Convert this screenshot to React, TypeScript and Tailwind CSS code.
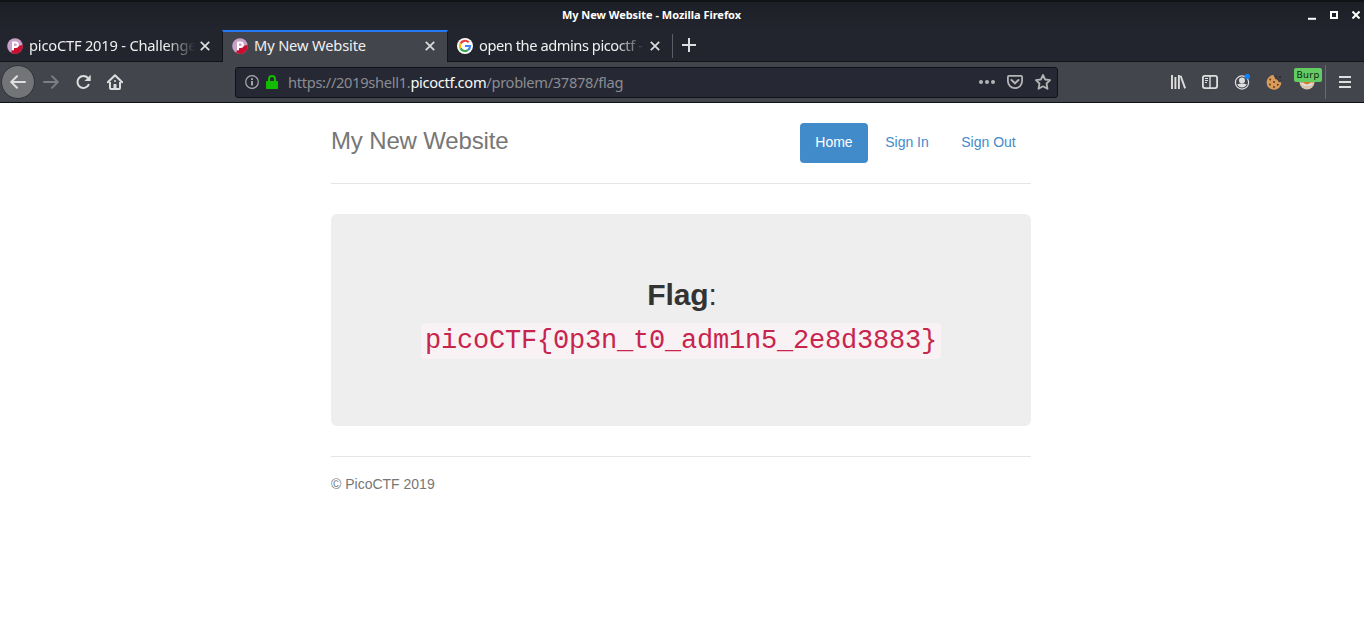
import React from "react";

const UI_FONT = "font-['Noto_Sans',sans-serif]";

function PicoIcon() {
  return (
    <svg width="16" height="16" viewBox="0 0 16 16" className="shrink-0">
      <circle cx="8" cy="8" r="7.8" fill="#c9a0c8" />
      <path d="M15.7 6.8A7.8 7.8 0 0 1 4.2 14.8L5.2 11.5 10 8.5Z" fill="#c8102e" />
      <path d="M6 12.2V4.6H8.6A2.2 2.2 0 0 1 8.6 9H6.5" fill="none" stroke="#fff" strokeWidth="2" strokeLinejoin="round" />
    </svg>
  );
}

function GoogleIcon() {
  return (
    <svg width="16" height="16" viewBox="0 0 16 16" className="shrink-0">
      <circle cx="8" cy="8" r="8" fill="#fff" />
      <g fill="none" strokeWidth="2.2">
        <path d="M11.7 4.3A5.1 5.1 0 0 0 3.5 5.6" stroke="#ea4335" />
        <path d="M3.5 5.6A5.1 5.1 0 0 0 3.5 10.4" stroke="#fbbc05" />
        <path d="M3.5 10.4A5.1 5.1 0 0 0 11.2 11.9" stroke="#34a853" />
        <path d="M11.2 11.9A5.1 5.1 0 0 0 13 8H8" stroke="#4285f4" />
      </g>
    </svg>
  );
}

function CloseIcon() {
  return (
    <svg width="10" height="10" viewBox="0 0 10 10" className="shrink-0">
      <path d="M.8.8 9.2 9.2M9.2.8.8 9.2" stroke="#dedede" strokeWidth="1.7" />
    </svg>
  );
}

function TitleBar() {
  return (
    <div className="flex h-[30px] shrink-0 items-center border-t-2 border-[#111216] bg-gradient-to-b from-[#1d1f27] to-[#23252e] pb-[2px]">
      <span className="flex-1 pr-px text-center text-[11px] leading-4 font-bold tracking-[-0.03px] text-white">My New Website - Mozilla Firefox</span>
      <div className="flex h-4 w-[60px] items-center pl-1">
        <svg width="8" height="8" className="mt-px shrink-0"><path d="M0 6.8H8" stroke="#fff" strokeWidth="2" /></svg>
        <svg width="8" height="8" className="ml-[14px] shrink-0"><path d="M1 1H7V7H1Z" fill="none" stroke="#fff" strokeWidth="2" /></svg>
        <svg width="8" height="8" className="ml-[14px] shrink-0"><path d="M.5.5 7.5 7.5M7.5.5.5 7.5" stroke="#fff" strokeWidth="2" /></svg>
      </div>
    </div>
  );
}

function TabBar() {
  return (
    <div className="flex h-8 shrink-0 bg-[#23252e] text-[14.67px] text-[#f0f0f1]">
      <div className="flex w-[222px] items-center border-b border-[#121319] pl-[7px]">
        <PicoIcon />
        <span className="ml-[6px] w-[166px] overflow-hidden pb-[2px] tracking-[-0.2px] whitespace-nowrap [mask-image:linear-gradient(to_right,black_137px,transparent_166px)]">picoCTF 2019 - Challenge</span>
        <span className="ml-[5px] flex"><CloseIcon /></span>
      </div>
      <div className="flex w-[226px] items-center border-x border-t-2 border-x-[#15161c] border-t-[#2478f5] bg-[#42454c] pl-[9px] pb-[3px]">
        <PicoIcon />
        <span className="ml-[6px] w-[171px] pb-[2px] tracking-[-0.15px] whitespace-nowrap">My New Website</span>
        <CloseIcon />
      </div>
      <div className="flex w-[224px] items-center border-b border-[#121319] pl-[9px]">
        <GoogleIcon />
        <span className="ml-[6px] w-[164px] overflow-hidden pb-[2px] tracking-[-0.45px] whitespace-nowrap [mask-image:linear-gradient(to_right,black_137px,transparent_166px)]">open the admins picoctf -</span>
        <span className="ml-[7px] flex"><CloseIcon /></span>
      </div>
      <div className="flex flex-1 items-center border-b border-[#121319]">
        <span className="h-6 w-px bg-[#5b5d65]" />
        <svg width="14" height="14" className="mb-px ml-[9px]"><path d="M0 7H14M7 0V14" stroke="#dedede" strokeWidth="2" /></svg>
      </div>
    </div>
  );
}

function AddressBar() {
  return (
    <div className="ml-[112px] flex h-[31px] w-[823px] shrink-0 items-center rounded-[3px] border border-[#111218] bg-[#262833] pl-[9px]">
      <svg width="14" height="14" viewBox="0 0 14 14" className="shrink-0">
        <circle cx="7" cy="7" r="6.3" fill="none" stroke="#a9aaaf" strokeWidth="1.2" />
        <path d="M7 6V10.6M7 3.2V4.9" stroke="#b9babe" strokeWidth="1.7" />
      </svg>
      <svg width="12" height="14" viewBox="0 0 12 14" className="ml-[7px] shrink-0">
        <path d="M3 7V4A3 3 0 0 1 9 4V7" fill="none" stroke="#12bc00" strokeWidth="2" />
        <rect y="6" width="12" height="8" rx="1" fill="#12bc00" />
      </svg>
      <span className="ml-[10px] w-[691px] text-[14.67px] tracking-[-0.31px] whitespace-nowrap text-[#8b8d94]">
        https://2019shell1.<span className="text-[#f9f9fa]">picoctf.com</span>/problem/37878/flag
      </span>
      <svg width="16" height="4" viewBox="0 0 16 4" className="shrink-0" fill="#b4b4b7">
        <circle cx="2" cy="2" r="2" /><circle cx="8" cy="2" r="2" /><circle cx="14" cy="2" r="2" />
      </svg>
      <svg width="16" height="14" viewBox="0 0 16 14" className="ml-3 shrink-0" fill="none" stroke="#b4b4b7" strokeWidth="1.8">
        <path d="M1.9.9H14.1Q15.1.9 15.1 2V6A7.1 7.1 0 0 1 .9 6V2Q.9.9 1.9.9Z" />
        <path d="M4.5 5 8 8.3 11.5 5" strokeLinecap="round" strokeWidth="2" />
      </svg>
      <svg width="16" height="16" viewBox="0 0 16 16" className="ml-3 shrink-0" fill="none" stroke="#b4b4b7" strokeWidth="1.8" strokeLinejoin="round">
        <path d="M8 1 10.1 5.5 15.1 6.1 11.5 9.5 12.5 14.8 8 12.3 3.5 14.8 4.5 9.5 .9 6.1 5.9 5.5Z" />
      </svg>
    </div>
  );
}

function ToolBar() {
  return (
    <div className="flex h-[41px] shrink-0 items-center border-b border-[#101115] bg-[#42454c]">
      <span className="ml-px flex size-[34px] shrink-0 items-center justify-center rounded-full border border-[#303238] bg-[#737477]">
        <svg width="16" height="14" viewBox="0 0 16 14" fill="none" stroke="#dedede" strokeWidth="2" strokeLinecap="round" strokeLinejoin="round"><path d="M15 7H1.5M7 1.2 1.2 7 7 12.8" /></svg>
      </span>
      <svg width="16" height="14" viewBox="0 0 16 14" className="ml-2 shrink-0" fill="none" stroke="#7d7e82" strokeWidth="1.9" strokeLinecap="round" strokeLinejoin="round"><path d="M.8 7H14.5M9 1.2 14.8 7 9 12.8" /></svg>
      <svg width="16" height="16" viewBox="0 0 16 16" className="ml-4 shrink-0">
        <path d="M14 10.2A6 6 0 1 1 13 4" fill="none" stroke="#dedede" strokeWidth="2" />
        <path d="M15.7 .8V7H9.5Z" fill="#dedede" />
      </svg>
      <svg width="16" height="16" viewBox="0 0 16 16" className="ml-4 shrink-0" fill="none" stroke="#dedede" strokeWidth="2">
        <path d="M.8 8.2 8 1.2 15.2 8.2" strokeLinecap="round" strokeLinejoin="round" />
        <path d="M3 8V14Q3 15 4 15H12Q13 15 13 14V8" /><path d="M8 15V10" strokeWidth="3" /><path d="M7 7H9" strokeWidth="1.4" />
      </svg>
      <AddressBar />
      <svg width="16" height="14" viewBox="0 0 16 14" className="ml-[112px] shrink-0" stroke="#dedede" strokeWidth="1.9">
        <path d="M2 0V14M5.4 2V14M8.9 0V14" /><path d="M10.6.7 15.1 13.4" />
      </svg>
      <svg width="16" height="14" viewBox="0 0 16 14" className="ml-4 shrink-0" fill="none" stroke="#dedede">
        <rect x=".9" y=".9" width="14.2" height="12.2" rx="2" strokeWidth="1.8" /><path d="M8 1V13" strokeWidth="1.4" /><path d="M3 3.5H6M3 5.5H6M3 7.5H5" />
      </svg>
      <svg width="17" height="16" viewBox="0 0 17 16" className="ml-4 shrink-0">
        <circle cx="8" cy="8.5" r="6.6" fill="none" stroke="#dedede" strokeWidth="1.2" />
        <circle cx="8" cy="6.6" r="3" fill="#dedede" /><path d="M3 10.5Q8 8.5 13 10.5Q11 13.5 8 13.5T3 10.5Z" fill="#dedede" />
        <circle cx="13.3" cy="2.6" r="2.7" fill="#0a84ff" />
      </svg>
      <svg width="17" height="17" viewBox="0 0 17 17" className="ml-[15px] shrink-0">
        <path d="M7.5 1A7.4 7.4 0 1 0 15.4 8.6L12.5 8 11.5 5.8 9.2 5Z" fill="#d99b5a" />
        <g fill="#693b1d"><circle cx="4.2" cy="5.5" r="1" /><circle cx="8" cy="8" r="1" /><circle cx="4" cy="10.5" r="1" /><circle cx="8" cy="13" r="1" /><circle cx="11.8" cy="10.8" r="1" /></g>
        <g fill="#292622"><circle cx="10" cy="2.4" r=".8" /><circle cx="14" cy="3" r=".9" /><circle cx="12" cy="5" r=".7" /><circle cx="15" cy="6" r=".6" /></g>
      </svg>
      <div className="relative ml-[16px] size-4 shrink-0">
        <svg width="16" height="16" viewBox="0 0 16 16"><circle cx="8" cy="8" r="7.5" fill="#d8c8ac" /><path d="M2 8Q8 17 14 8" fill="#d87b27" /><path d="M3 9Q8 14 13 9" fill="none" stroke="#ddd" strokeWidth="2" /></svg>
        <span className="absolute -top-[6px] -left-[5px] flex h-[14px] w-[28px] items-center justify-center rounded-[2px] bg-[#62cc62] text-[9.5px] leading-none tracking-[0.35px] text-[#10240f]">Burp</span>
      </div>
      <span className="ml-[10px] h-[34px] w-px bg-[#686a70]" />
      <svg width="12" height="12" viewBox="0 0 12 12" className="ml-[13px] shrink-0"><path d="M0 1H12M0 6H12M0 11H12" stroke="#dedede" strokeWidth="2" /></svg>
    </div>
  );
}

function Website() {
  return (
    <main className="ml-[331px] w-[700px] font-['Liberation_Sans',sans-serif] text-sm text-[#333]">
      <header className="flex h-[81px] items-start justify-between border-b border-[#e5e5e5] pt-5">
        <h3 className="pt-[4px] text-2xl leading-7 tracking-[-0.15px] text-[#777]">My New Website</h3>
        <nav className="flex gap-[2px] leading-5 text-[#428bca]">
          <a className="h-10 w-[68px] rounded bg-[#428bca] pt-[9px] text-center text-white">Home</a>
          <a className="w-[74px] pt-[9px] text-center">Sign In</a>
          <a className="w-[85px] pt-[9px] text-center">Sign Out</a>
        </nav>
      </header>
      <section className="mt-[30px] flex h-[212px] flex-col items-center rounded-md bg-[#eee] pt-[64px]">
        <p className="pl-[2px] text-[30px] leading-[34px] tracking-[-0.1px]"><strong>Flag</strong>:</p>
        <code className="mt-[11px] flex h-9 w-[520px] justify-center rounded bg-[#f9f2f4] pt-[2px] font-['Liberation_Mono',monospace] text-[27px] leading-[33px] tracking-[-0.2px] text-[#c7254e]">picoCTF{"{"}0p3n_t0_adm1n5_2e8d3883{"}"}</code>
      </section>
      <footer className="mt-[30px] border-t border-[#e5e5e5] pt-[17px] leading-5 text-[#777]">© PicoCTF 2019</footer>
    </main>
  );
}

export default function App() {
  return (
    <div className={"flex h-screen flex-col overflow-hidden bg-white " + UI_FONT}>
      <TitleBar />
      <TabBar />
      <ToolBar />
      <Website />
    </div>
  );
}
